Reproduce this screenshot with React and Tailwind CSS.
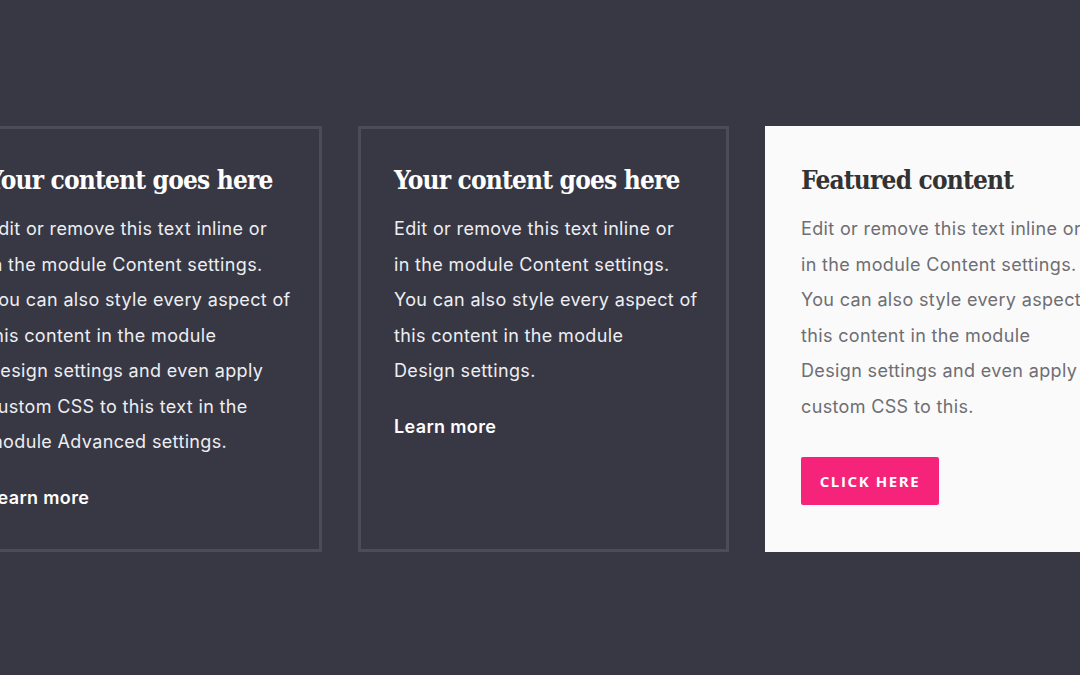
import React from 'react';

const body = "font-['Inter','Noto_Sans',sans-serif] text-[18px] leading-[35.5px] tracking-[0.35px]";
const heading = "font-['DejaVu_Serif_Condensed','DejaVu_Serif',serif] font-stretch-condensed font-bold text-[26px] leading-[34px] tracking-[-0.8px]";

const cards = [
  {
    lines: [
      'Edit or remove this text inline or',
      'in the module Content settings.',
      'You can also style every aspect of',
      'this content in the module',
      'Design settings and even apply',
      'custom CSS to this text in the',
      'module Advanced settings.',
    ],
  },
  {
    lines: [
      'Edit or remove this text inline or',
      'in the module Content settings.',
      'You can also style every aspect of',
      'this content in the module',
      'Design settings.',
    ],
  },
];

const OutlineCard = ({ lines }) => (
  <div className="w-[371px] shrink-0 border-[3px] border-[#4b4c59] px-[33px] pt-[34px] pb-[34px]">
    <h2 className={`${heading} text-white whitespace-nowrap mb-[14px]`}>Your content goes here</h2>
    <p className={`${body} text-[#eeeef2] whitespace-nowrap`}>
      {lines.map((line, i) => (
        <span key={i} className="block">{line}</span>
      ))}
    </p>
    <a className={`${body} block mt-[20px] font-semibold text-white`}>Learn more</a>
  </div>
);

export default function App() {
  return (
    <div className="w-[1080px] h-[675px] overflow-hidden bg-[#373844] pt-[126px]">
      <div className="flex items-stretch gap-[36px] -ml-[49px]">
        {cards.map((card, i) => (
          <OutlineCard key={i} lines={card.lines} />
        ))}

        {/* Featured */}
        <div className="w-[371px] shrink-0 bg-[#fafafa] px-[36px] pt-[37px]">
          <h2 className={`${heading} text-[#333333] whitespace-nowrap mb-[14px]`}>Featured content</h2>
          <p className={`${body} text-[#6e6e73] whitespace-nowrap`}>
            <span className="block">Edit or remove this text inline or</span>
            <span className="block">in the module Content settings.</span>
            <span className="block">You can also style every aspect of</span>
            <span className="block">this content in the module</span>
            <span className="block">Design settings and even apply</span>
            <span className="block">custom CSS to this.</span>
          </p>
          <button className="mt-[33px] h-[48px] w-[138px] rounded-[2px] bg-[#f5247a] font-['Open_Sans','Noto_Sans',sans-serif] text-[15px] font-bold uppercase tracking-[1.6px] text-white">
            Click here
          </button>
        </div>
      </div>
    </div>
  );
}
